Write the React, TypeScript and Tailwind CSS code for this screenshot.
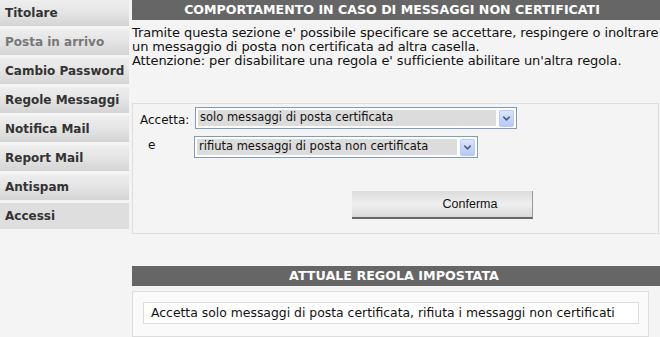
import { ChevronDown } from 'lucide-react'

const menu = [
  { label: 'Titolare' },
  { label: 'Posta in arrivo', muted: true },
  { label: 'Cambio Password' },
  { label: 'Regole Messaggi' },
  { label: 'Notifica Mail' },
  { label: 'Report Mail' },
  { label: 'Antispam' },
  { label: 'Accessi', flat: true },
]

function FakeSelect({ value, width }: { value: string; width: string }) {
  return (
    <div className={`flex h-[22px] items-center border border-[#7f9db9] bg-white p-[2px] ${width}`}>
      <div className="flex h-full flex-1 items-center bg-[#dcdcdc] pl-[2px] text-[11.5px] text-[#111]">{value}</div>
      <div className="ml-[3px] flex h-[17px] w-[15px] items-center justify-center rounded-[2px] border border-[#b9cbf5] bg-gradient-to-b from-[#dbe5fd] to-[#b5c8f7]">
        <ChevronDown size={11} strokeWidth={3.5} className="text-[#4d6185]" />
      </div>
    </div>
  )
}

export default function App() {
  return (
    <div className="flex h-[337px] w-[660px] overflow-hidden bg-[#f4f4f4] font-['DejaVu_Sans',sans-serif]">
      <nav className="flex w-[129px] shrink-0 flex-col gap-[3px]">
        {menu.map((m) => (
          <div
            key={m.label}
            className={`flex h-[26px] items-center pl-[5px] text-[12px] font-bold ${
              m.flat ? 'bg-[#dedede]' : 'bg-gradient-to-b from-[#eeeeee] via-[#e4e4e4] to-[#d4d4d4]'
            } ${m.muted ? 'text-[#777]' : 'text-[#333]'}`}
          >
            {m.label}
          </div>
        ))}
      </nav>

      <main className="ml-[3px] flex flex-1 flex-col">
        <h2 className="flex h-[20px] items-center justify-center bg-[#666] pr-[8px] text-[12.6px] font-bold text-white">
          COMPORTAMENTO IN CASO DI MESSAGGI NON CERTIFICATI
        </h2>
        <p className="mt-[6px] whitespace-nowrap text-[13px] leading-[14px] tracking-[-0.1px] text-[#111]">
          Tramite questa sezione e' possibile specificare se accettare, respingere o inoltrare
          <br />
          un messaggio di posta non certificata ad altra casella.
          <br />
          Attenzione: per disabilitare una regola e' sufficiente abilitare un'altra regola.
        </p>

        <section className="mt-[35px] h-[131px] w-[527px] border border-[#dddddd] px-[7px] pt-[3px]">
          <div className="flex items-center">
            <span className="w-[55px] pt-[4px] text-[12px] text-[#111]">Accetta:</span>
            <FakeSelect value="solo messaggi di posta certificata" width="w-[322px]" />
          </div>
          <div className="mt-[7px] flex items-start">
            <span className="w-[54px] pl-[8px] text-[12px] text-[#111]">e</span>
            <FakeSelect value="rifiuta messaggi di posta non certificata" width="w-[284px]" />
          </div>
          <div className="mt-[33px] pl-[212px]">
            <button className="h-[28px] w-[181px] border-r border-b-2 border-r-[#999] border-b-[#666] bg-gradient-to-b from-[#dcdcdc] via-[#efefef] to-[#dadada] pl-[56px] font-['Liberation_Sans',sans-serif] text-[12.5px] text-[#111]">
              Conferma
            </button>
          </div>
        </section>

        <h2 className="mt-[32px] flex h-[20px] items-center justify-center bg-[#666] pr-[4px] text-[12.7px] font-bold text-white">
          ATTUALE REGOLA IMPOSTATA
        </h2>
        <section className="mt-[5px] w-[517px] flex-1 border border-[#dddddd] bg-[#fafafa] px-[10px] pt-[10px]">
          <div className="flex h-[22px] w-[496px] items-center border border-[#dddddd] bg-white pl-[7px] text-[12.4px] text-[#111]">
            Accetta solo messaggi di posta certificata, rifiuta i messaggi non certificati
          </div>
        </section>
      </main>
    </div>
  )
}
